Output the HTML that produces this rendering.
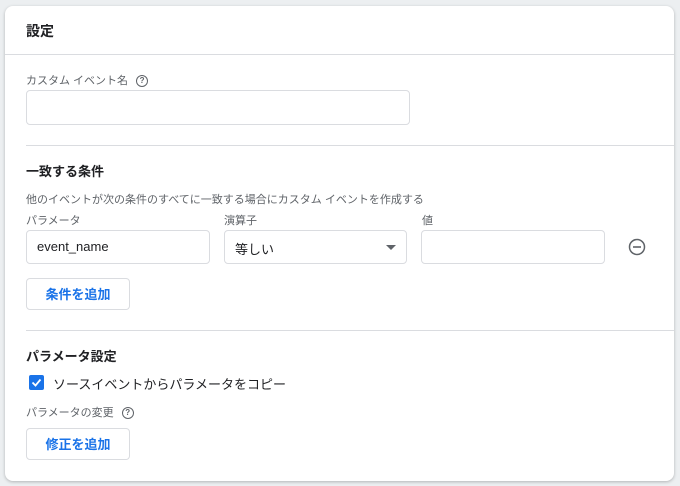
<!DOCTYPE html>
<html><head><meta charset="utf-8"><style>
body{margin:0;width:680px;height:486px;background:#eceff1;font-family:"Liberation Sans","Noto Sans CJK JP",sans-serif;color:#202124;position:relative;overflow:hidden}
.card{position:absolute;left:5px;top:6px;width:669px;height:475px;background:#fff;border-radius:8px;box-shadow:0 1px 3px rgba(0,0,0,.25)}
.a{position:absolute;white-space:nowrap}
.inp{position:absolute;border:1px solid #dadce0;border-radius:4px;background:#fff;box-sizing:border-box}
.hr{position:absolute;height:1px;background:#dadce0}
.lbl{font-size:11px;color:#5f6368}
.h{font-size:13px;font-weight:bold}
.btn{position:absolute;border:1px solid #dadce0;border-radius:4px;box-sizing:border-box;color:#1a73e8;font-size:13px;font-weight:bold;text-align:center}
.q{display:inline-block;width:10px;height:10px;border:1.3px solid #5f6368;border-radius:50%;font-size:8px;line-height:10px;text-align:center;color:#5f6368;vertical-align:middle;margin-left:8px;font-weight:bold}
</style></head><body>
<div class="card"></div>
<div class="a h" style="left:26px;top:21px;font-size:14px">設定</div>
<div class="hr" style="left:5px;width:669px;top:54px"></div>
<div class="a lbl" style="left:26px;top:72px">カスタム イベント名<span class="q">?</span></div>
<div class="inp" style="left:26px;top:90px;width:384px;height:35px"></div>
<div class="hr" style="left:26px;width:648px;top:145px"></div>
<div class="a h" style="left:26px;top:161px">一致する条件</div>
<div class="a lbl" style="left:26px;top:191px">他のイベントが次の条件のすべてに一致する場合にカスタム イベントを作成する</div>
<div class="a lbl" style="left:26px;top:212px">パラメータ</div>
<div class="a lbl" style="left:224px;top:212px">演算子</div>
<div class="a lbl" style="left:422px;top:212px">値</div>
<div class="inp" style="left:26px;top:230px;width:184px;height:34px"></div>
<div class="a" style="left:37px;top:239px;font-size:13px">event_name</div>
<div class="inp" style="left:224px;top:230px;width:183px;height:34px"></div>
<div class="a" style="left:235px;top:239px;font-size:13px">等しい</div>
<div class="a" style="left:386px;top:245px;width:0;height:0;border-left:5px solid transparent;border-right:5px solid transparent;border-top:5px solid #5f6368"></div>
<div class="inp" style="left:421px;top:230px;width:184px;height:34px"></div>
<svg class="a" style="left:628px;top:238px" width="18" height="18" viewBox="0 0 18 18"><circle cx="9" cy="9" r="7.5" fill="none" stroke="#5f6368" stroke-width="1.5"/><line x1="5" y1="9" x2="13" y2="9" stroke="#5f6368" stroke-width="1.6"/></svg>
<div class="btn" style="left:26px;top:278px;width:104px;height:32px;line-height:32px">条件を追加</div>
<div class="hr" style="left:26px;width:648px;top:330px"></div>
<div class="a h" style="left:26px;top:346px">パラメータ設定</div>
<svg class="a" style="left:29px;top:375px" width="15" height="15" viewBox="0 0 15 15"><rect x="0" y="0" width="15" height="15" rx="2" fill="#1a73e8"/><path d="M3.5 7.5l3 3 5-6" fill="none" stroke="#fff" stroke-width="1.8"/></svg>
<div class="a" style="left:53px;top:374px;font-size:13px">ソースイベントからパラメータをコピー</div>
<div class="a lbl" style="left:26px;top:404px">パラメータの変更<span class="q">?</span></div>
<div class="btn" style="left:26px;top:428px;width:104px;height:32px;line-height:32px">修正を追加</div>
</body></html>
